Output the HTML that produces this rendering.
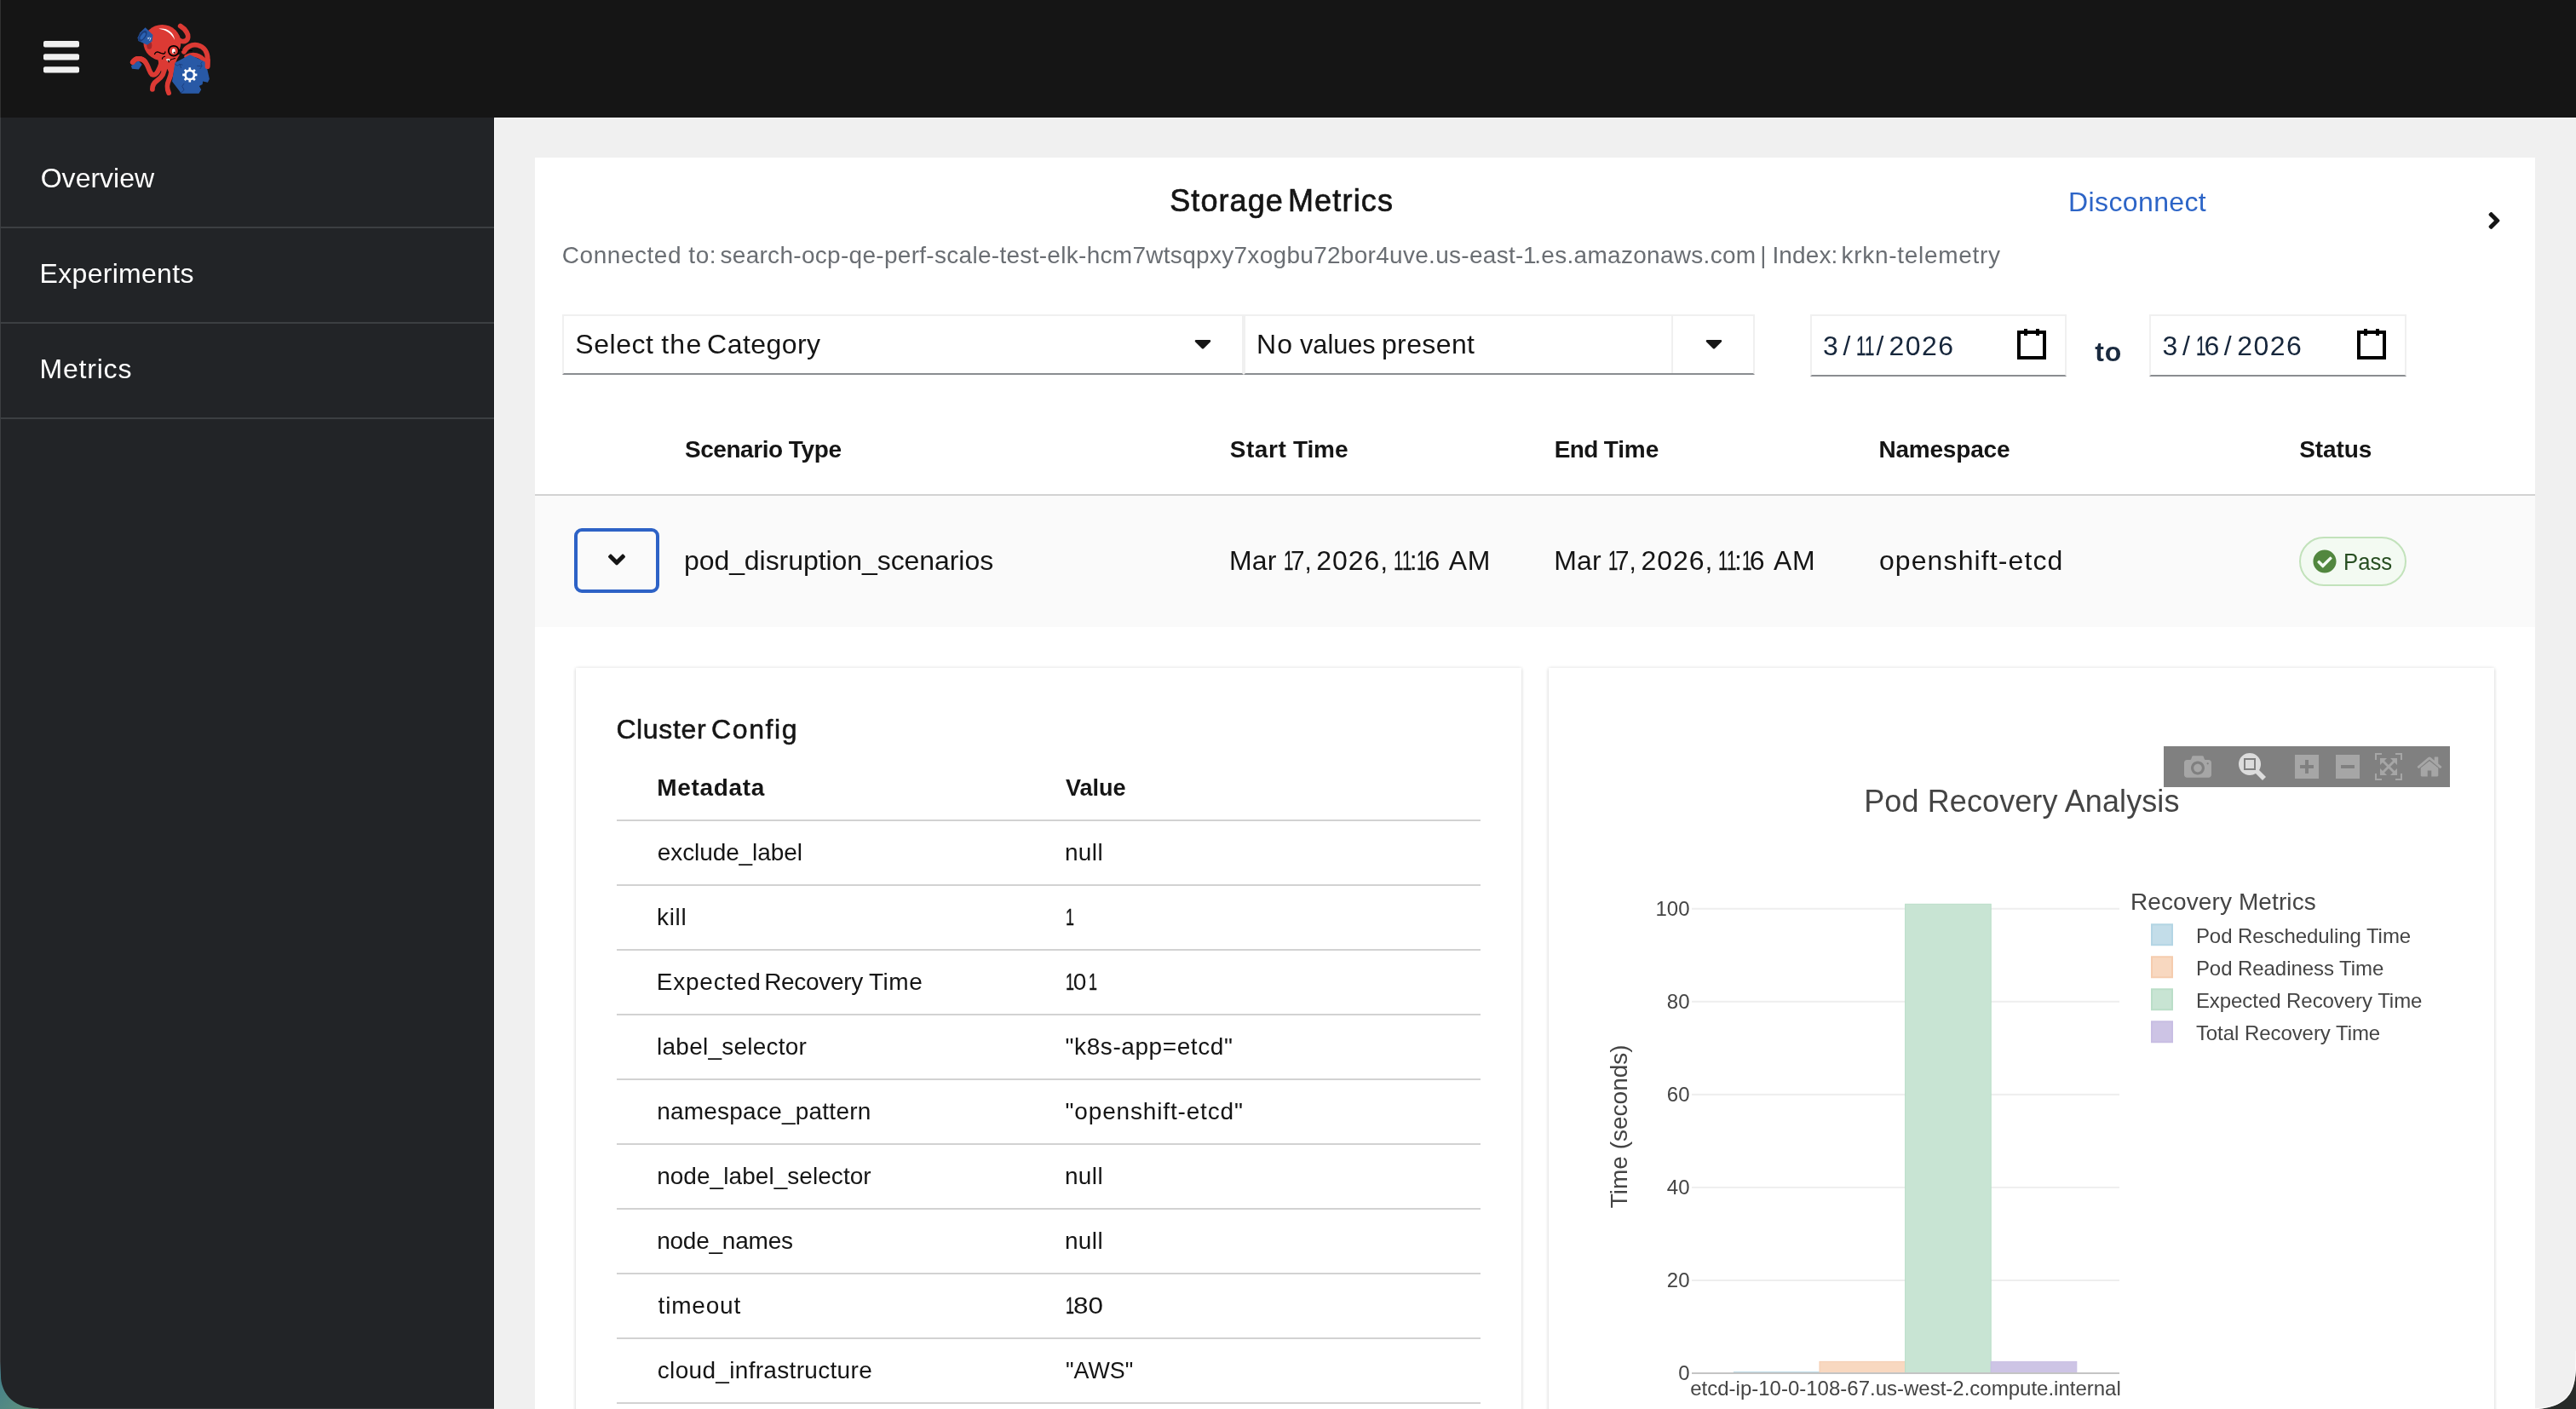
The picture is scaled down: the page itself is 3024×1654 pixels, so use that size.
<!DOCTYPE html>
<html lang="en"><head><meta charset="utf-8"><title>Krkn Dashboard - Storage Metrics</title>
<style>
html,body{margin:0;padding:0}
body{width:3024px;height:1654px;overflow:hidden;position:relative;background:#f0f0f0;font-family:"Liberation Sans",sans-serif;color:#151515}
.a{position:absolute}
.t{position:absolute;white-space:nowrap;font-family:"Liberation Sans",sans-serif}
.n1{font-style:normal;margin-left:-0.030em;margin-right:-0.090em}
svg{position:absolute;overflow:visible}
#win{position:absolute;left:0;top:0;width:3024px;height:1654px;overflow:hidden;background:#f0f0f0;}
#fg{position:absolute;left:0;top:0;width:3024px;height:1654px;will-change:transform}
</style></head><body><div id="win">

<div class="a" style="left:0;top:0;width:3024px;height:138px;background:#151515"></div>
<div class="a" style="left:0;top:138px;width:580px;height:1516px;background:#222427"></div>
<div class="a" style="left:580px;top:138px;width:2444px;height:1px;background:#fff"></div>
<div class="a" style="left:580px;top:138px;width:1px;height:1516px;background:#fff"></div>
<div class="a" style="left:0;top:0;width:1px;height:1654px;background:rgba(255,255,255,.12)"></div>
<svg style="left:51px;top:48px" width="42" height="38" viewBox="0 0 42 38"><g fill="#f0f0f0"><rect x="0" y="0" width="42" height="7.4" rx="2"/><rect x="0" y="15.2" width="42" height="7.4" rx="2"/><rect x="0" y="30.2" width="42" height="7.4" rx="2"/></g></svg>
<svg style="left:140px;top:20px" width="120" height="100" viewBox="0 0 120 100">
<g fill="none" stroke="#dc3a34" stroke-linecap="round" stroke-linejoin="round" stroke-width="5.8">
<path d="M66.5,24 C70,28.6 75.5,29.6 78.4,27.6 C81.2,25.6 81.4,21.4 79,17.6 C77,14.4 74.4,12.2 71.7,10.6"/>
<path d="M76,40.8 C78.4,35.4 85,31.6 92,33 C99.6,34.6 103.9,41.4 103.8,50 C103.7,53.6 103.6,56 103.5,58.2"/>
<path stroke-width="5.4" d="M79,46.6 C86,42.4 95.5,44.4 100.2,52"/>
<path d="M15.8,53 C17.4,50.2 20,48.8 22.8,48.9 C26,49 28.6,50 30.4,52.4 C32.4,55 33.2,57.2 34.2,59.6 C35.4,62.6 36.2,65.6 38.4,67.4 C40.6,68.6 43.2,67.2 45,64.2 C47,60.8 48.2,58 49,55"/>
<path d="M53.5,57 C53.5,66 50,71 44.2,74.7 C40,77.5 38.9,80.5 38.9,84.8"/>
<path d="M61.6,55 C61.8,64 60.5,69 58.5,73.2 C55.6,79.4 55.5,83.2 58.1,89.1"/>
</g>
<path fill="#dc3a34" d="M45,46 C46,56 48,62 51,66 L56.5,61 L58.7,66 L64.5,62 C65,56 67,50 71,44 Z"/>
<ellipse cx="50.4" cy="30" rx="22" ry="21" fill="#dc3a34"/>
<ellipse cx="35.3" cy="33.2" rx="3" ry="4.5" fill="#a3272a"/>
<path fill="#2859a6" d="M30.6,12.3 L39.5,21.1 L38.6,28.5 L32.9,32.7 L22.4,28.1 L21.6,24.2 L24.4,18.2 Z"/>
<ellipse cx="27.4" cy="22.2" rx="3.7" ry="7.4" transform="rotate(35 27.4 22.2)" fill="#1b3d7c"/>
<ellipse cx="27.7" cy="22.3" rx="2" ry="4.7" transform="rotate(35 27.7 22.3)" fill="#2c62b4"/>
<path fill="none" stroke="#e4ecf7" stroke-width="0.75" d="M33.2,23.8 l1.7,2 M35.3,23.5 l-1.9,2.7 M35.9,24.4 l1,1.4 M37.1,23.9 l-1.5,4"/>
<path fill="#fff" d="M46.3,13.8 C55,12.4 63.8,17 65.1,26.9 C61.6,19.6 55,15.2 46.3,13.8Z"/>
<path fill="#2859a6" d="M83,44.2 L100.5,52.6 L103.2,60.8 L105.9,72.8 L103.9,76.7 L98.1,75.5 L97.7,79 L93.9,80.9 L96.2,85.2 L93.5,89.7 L72.9,89.7 L62,75.5 L65.5,53.6 Z"/>
<path fill="none" stroke="#1b3d7c" stroke-width="0.95" stroke-linejoin="round" stroke-linecap="round" d="M65.6,55.3 L68.2,57.2 L71,55.3 L72.5,59.6 M71,55.3 L74,56.1 M97.3,52.6 L95.8,54.5 L97,57.3 L95,60.7 M91.5,57.3 L97,57.6 M76,78.2 L73.7,81.3 L76,85.2 L74,87.9 L71.8,88.7"/>
<path fill="#fff" fill-rule="evenodd" d="M81.51,61.43 L81.51,59.30 L84.09,59.30 L84.09,61.43 L86.47,62.41 L87.97,60.90 L89.80,62.73 L88.29,64.23 L89.27,66.61 L91.40,66.61 L91.40,69.19 L89.27,69.19 L88.29,71.57 L89.80,73.07 L87.97,74.90 L86.47,73.39 L84.09,74.37 L84.09,76.50 L81.51,76.50 L81.51,74.37 L79.13,73.39 L77.63,74.90 L75.80,73.07 L77.31,71.57 L76.33,69.19 L74.20,69.19 L74.20,66.61 L76.33,66.61 L77.31,64.23 L75.80,62.73 L77.63,60.90 L79.13,62.41Z M86.70,67.90 A3.9,3.9 0 1,0 78.90,67.90 A3.9,3.9 0 1,0 86.70,67.90Z"/>
<path fill="none" stroke="#dc3a34" stroke-width="5.8" stroke-linecap="round" d="M103.78,51 C103.7,53.6 103.6,56 103.5,58.2"/>
<circle cx="63.8" cy="39.7" r="5.95" fill="#dc3a34" stroke="#000" stroke-width="1.75"/>
<ellipse cx="63.8" cy="39.9" rx="1.95" ry="3" fill="#fff"/>
<circle cx="64.5" cy="41.7" r="0.95" fill="#000"/>
<path fill="none" stroke="#000" stroke-width="1.3" stroke-linecap="round" d="M70.6,38.7 L73.7,38.9 M82.4,39.7 L85.4,39.3"/>
<path fill="none" stroke="#000" stroke-width="1.3" stroke-linecap="round" d="M41.5,43.5 C42.2,41.6 43.2,40.9 44.4,40.8 C46,40.8 47.4,41.8 49.2,42.5 C50.8,43.1 52.4,43.1 53.2,42.6 C53.8,42.2 54,41.6 53.9,40.9"/>
<path fill="none" stroke="#000" stroke-width="1.1" stroke-linecap="round" d="M50.4,49.1 C50.5,47.6 51.8,46.5 53.6,46.2"/>
<path fill="#fff" d="M55,49.8 C56.4,48.7 58.8,48.9 60,50.2 L58.6,52.4 C56.8,52.3 55.4,51.2 55,49.8Z"/>
<path fill="none" stroke="#000" stroke-width="1" stroke-linecap="round" stroke-linejoin="round" d="M57.2,50.4 L58.2,53.2 L59.7,50.4 C61.6,49.6 63.6,49 65.5,48.5"/>
<path fill="#2859a6" d="M13.9,57.3 L22.4,50.9 L26.7,55.7 L22.8,61.5 L15,60.75 Z"/>
<path fill="none" stroke="#dc3a34" stroke-width="5.8" stroke-linecap="round" d="M15.8,53 C17.4,50.2 20,48.8 22.8,48.9 C26,49 28.6,50 30.4,52.4"/>
</svg>
<div class="a" style="left:0;top:266px;width:580px;height:2px;background:#3c3f42"></div>
<div class="a" style="left:0;top:378px;width:580px;height:2px;background:#3c3f42"></div>
<div class="a" style="left:0;top:490px;width:580px;height:2px;background:#3c3f42"></div>
<div class="a" style="left:628px;top:185px;width:2348px;height:1469px;background:#fff"></div>
<svg style="left:2920px;top:243.4px" width="16" height="32" viewBox="0 0 256 512"><path fill="#151515" d="M224.3 273l-136 136c-9.4 9.4-24.6 9.4-33.9 0l-22.6-22.6c-9.4-9.4-9.4-24.6 0-33.9l96.4-96.4-96.4-96.4c-9.4-9.4-9.4-24.6 0-33.9L54.3 103c9.4-9.4 24.6-9.4 33.9 0l136 136c9.5 9.4 9.5 24.6.1 34z"/></svg>
<div class="a" style="left:660px;top:369px;width:800px;height:71px;box-sizing:border-box;background:#fff;border:2px solid #f0f0f0;border-bottom:2px solid #8a8d90"></div>
<div class="a" style="left:1460px;top:369px;width:600px;height:71px;box-sizing:border-box;background:#fff;border:2px solid #f0f0f0;border-bottom:2px solid #8a8d90"></div>
<div class="a" style="left:1962px;top:371px;width:2px;height:67px;background:#f0f0f0"></div>
<svg style="left:1402px;top:386.7px" width="20" height="32" viewBox="0 0 320 512"><path fill="#151515" d="M31.3 192h257.3c17.8 0 26.7 21.5 14.1 34.1L174.1 354.8c-7.8 7.8-20.5 7.8-28.3 0L17.2 226.1C4.6 213.5 13.5 192 31.3 192z"/></svg>
<svg style="left:2001.8px;top:386.9px" width="20" height="32" viewBox="0 0 320 512"><path fill="#151515" d="M31.3 192h257.3c17.8 0 26.7 21.5 14.1 34.1L174.1 354.8c-7.8 7.8-20.5 7.8-28.3 0L17.2 226.1C4.6 213.5 13.5 192 31.3 192z"/></svg>
<div class="a" style="left:2125px;top:369px;width:301px;height:73px;box-sizing:border-box;background:#fff;border:2px solid #f0f0f0;border-bottom:2px solid #8a8d90"></div>
<div class="a" style="left:2523px;top:369px;width:302px;height:73px;box-sizing:border-box;background:#fff;border:2px solid #f0f0f0;border-bottom:2px solid #8a8d90"></div>
<svg style="left:2368px;top:386px" width="34" height="38" viewBox="0 0 34 38"><path fill="none" stroke="#000" stroke-width="4" d="M2 4H32V34H2Z"/><path fill="#000" d="M8 0h4v8H8zM22 0h4v8h-4z"/></svg>
<svg style="left:2767px;top:386px" width="34" height="38" viewBox="0 0 34 38"><path fill="none" stroke="#000" stroke-width="4" d="M2 4H32V34H2Z"/><path fill="#000" d="M8 0h4v8H8zM22 0h4v8h-4z"/></svg>
<div class="a" style="left:628px;top:580px;width:2348px;height:2px;background:#d2d2d2"></div>
<div class="a" style="left:628px;top:582px;width:2348px;height:154px;background:#fafafa"></div>
<div class="a" style="left:674px;top:620px;width:100px;height:76px;box-sizing:border-box;border:4px solid #2d62c6;border-radius:9px;background:#fafafa"></div>
<svg style="left:714px;top:641.3px" width="20" height="32" viewBox="0 0 320 512"><path fill="#151515" d="M143 352.3L7 216.3c-9.4-9.4-9.4-24.6 0-33.9l22.6-22.6c9.4-9.4 24.6-9.4 33.9 0l96.4 96.4 96.4-96.4c9.4-9.4 24.6-9.4 33.9 0l22.6 22.6c9.4 9.4 9.4 24.6 0 33.9l-136 136c-9.2 9.4-24.4 9.4-33.8 0z"/></svg>
<div class="a" style="left:2699px;top:630px;width:126px;height:58px;box-sizing:border-box;border:2px solid #c2e2bb;border-radius:29px;background:#f3faf2"></div>
<svg style="left:2715px;top:645px" width="28" height="28" viewBox="0 0 512 512"><path fill="#52873f" d="M504 256c0 136.967-111.033 248-248 248S8 392.967 8 256 119.033 8 256 8s248 111.033 248 248zM227.314 387.314l184-184c6.248-6.248 6.248-16.379 0-22.627l-22.627-22.627c-6.248-6.249-16.379-6.249-22.628 0L216 308.118l-70.059-70.059c-6.248-6.248-16.379-6.248-22.628 0l-22.627 22.627c-6.248 6.248-6.248 16.379 0 22.627l104 104c6.249 6.249 16.379 6.249 22.628.001z"/></svg>
<div class="a" style="left:676px;top:784px;width:1110px;height:900px;box-shadow:0 1px 4px rgba(3,3,3,.14),0 0 4px rgba(3,3,3,.07);background:#fff"></div>
<div class="a" style="left:724px;top:962px;width:1014px;height:2px;background:#d2d2d2"></div>
<div class="a" style="left:724px;top:1038px;width:1014px;height:2px;background:#d2d2d2"></div>
<div class="a" style="left:724px;top:1114px;width:1014px;height:2px;background:#d2d2d2"></div>
<div class="a" style="left:724px;top:1190px;width:1014px;height:2px;background:#d2d2d2"></div>
<div class="a" style="left:724px;top:1266px;width:1014px;height:2px;background:#d2d2d2"></div>
<div class="a" style="left:724px;top:1342px;width:1014px;height:2px;background:#d2d2d2"></div>
<div class="a" style="left:724px;top:1418px;width:1014px;height:2px;background:#d2d2d2"></div>
<div class="a" style="left:724px;top:1494px;width:1014px;height:2px;background:#d2d2d2"></div>
<div class="a" style="left:724px;top:1570px;width:1014px;height:2px;background:#d2d2d2"></div>
<div class="a" style="left:724px;top:1646px;width:1014px;height:2px;background:#d2d2d2"></div>
<div class="a" style="left:1818px;top:784px;width:1110px;height:900px;box-shadow:0 1px 4px rgba(3,3,3,.14),0 0 4px rgba(3,3,3,.07);background:#fff"></div>
<div class="a" style="left:36px;top:1653px;width:544px;height:1px;background:rgba(255,255,255,.13)"></div>
<div id="fg">
<span class="t" style="left:47.73px;top:193.41px;font-size:32px;line-height:32px;letter-spacing:0.011px;color:#fff;">Overview</span>
<span class="t" style="left:46.62px;top:305.41px;font-size:32px;line-height:32px;letter-spacing:0.294px;color:#fff;">Experiments</span>
<span class="t" style="left:46.62px;top:417.41px;font-size:32px;line-height:32px;letter-spacing:0.779px;color:#fff;">Metrics</span>
<span class="t" style="left:1373.27px;top:217.52px;font-size:36px;line-height:36px;letter-spacing:1.074px;color:#151515;-webkit-text-stroke:.7px #151515;">Storage</span>
<span class="t" style="left:1511.95px;top:217.52px;font-size:36px;line-height:36px;letter-spacing:1.176px;color:#151515;-webkit-text-stroke:.7px #151515;">Metrics</span>
<span class="t" style="left:2428.12px;top:220.91px;font-size:32px;line-height:32px;letter-spacing:0.368px;color:#2d65c7;">Disconnect</span>
<span class="t" style="left:659.83px;top:285.54px;font-size:28px;line-height:28px;letter-spacing:0.532px;color:#6a6e73;">Connected to:</span>
<span class="t" style="left:845.47px;top:285.54px;font-size:28px;line-height:28px;letter-spacing:0.295px;color:#6a6e73;">search-ocp-qe-perf-scale-test-elk-hcm7wtsqpxy7xogbu72bor4uve.us-east-<i class="n1">1</i>.es.amazonaws.com</span>
<span class="t" style="left:2066.20px;top:285.54px;font-size:28px;line-height:28px;letter-spacing:0.000px;color:#6a6e73;">|</span>
<span class="t" style="left:2080.42px;top:285.54px;font-size:28px;line-height:28px;letter-spacing:0.123px;color:#6a6e73;">Index:</span>
<span class="t" style="left:2161.61px;top:285.54px;font-size:28px;line-height:28px;letter-spacing:0.698px;color:#6a6e73;">krkn-telemetry</span>
<span class="t" style="left:675.30px;top:387.91px;font-size:32px;line-height:32px;letter-spacing:0.550px;color:#151515;">Select</span>
<span class="t" style="left:776.27px;top:387.91px;font-size:32px;line-height:32px;letter-spacing:1.211px;color:#151515;">the</span>
<span class="t" style="left:830.12px;top:387.91px;font-size:32px;line-height:32px;letter-spacing:0.442px;color:#151515;">Category</span>
<span class="t" style="left:1474.88px;top:387.91px;font-size:32px;line-height:32px;letter-spacing:1.312px;color:#151515;">No</span>
<span class="t" style="left:1526.40px;top:387.91px;font-size:32px;line-height:32px;letter-spacing:0.000px;color:#151515;transform:scaleX(0.9591);transform-origin:0 0;">values</span>
<span class="t" style="left:1621.94px;top:387.91px;font-size:32px;line-height:32px;letter-spacing:0.385px;color:#151515;">present</span>
<span class="t" style="left:2139.98px;top:389.61px;font-size:32px;line-height:32px;letter-spacing:0.000px;color:#16263b;">3</span>
<span class="t" style="left:2163.60px;top:389.61px;font-size:32px;line-height:32px;letter-spacing:0.000px;color:#16263b;">/</span>
<span class="t" style="left:2202.50px;top:389.61px;font-size:32px;line-height:32px;letter-spacing:0.000px;color:#16263b;">/</span>
<span class="t" style="left:2217.39px;top:389.61px;font-size:32px;line-height:32px;letter-spacing:1.509px;color:#16263b;">2026</span>
<span class="t" style="left:2538.58px;top:389.61px;font-size:32px;line-height:32px;letter-spacing:0.000px;color:#16263b;">3</span>
<span class="t" style="left:2561.90px;top:389.61px;font-size:32px;line-height:32px;letter-spacing:0.000px;color:#16263b;">/</span>
<span class="t" style="left:2587.38px;top:389.61px;font-size:32px;line-height:32px;letter-spacing:0.000px;color:#16263b;">6</span>
<span class="t" style="left:2610.80px;top:389.61px;font-size:32px;line-height:32px;letter-spacing:0.000px;color:#16263b;">/</span>
<span class="t" style="left:2626.19px;top:389.61px;font-size:32px;line-height:32px;letter-spacing:1.509px;color:#16263b;">2026</span>
<span class="t" style="left:2179.14px;top:389.61px;font-size:32px;line-height:32px;color:#16263b;-webkit-text-stroke:.4px #16263b;transform:scaleX(0.64);transform-origin:0 0">1</span>
<span class="t" style="left:2188.94px;top:389.61px;font-size:32px;line-height:32px;color:#16263b;-webkit-text-stroke:.4px #16263b;transform:scaleX(0.64);transform-origin:0 0">1</span>
<span class="t" style="left:2577.84px;top:389.61px;font-size:32px;line-height:32px;color:#16263b;-webkit-text-stroke:.4px #16263b;transform:scaleX(0.64);transform-origin:0 0">1</span>
<span class="t" style="left:2459.21px;top:396.66px;font-size:32px;line-height:32px;letter-spacing:0.938px;color:#1b2b40;font-weight:700;">to</span>
<span class="t" style="left:803.94px;top:513.79px;font-size:28px;line-height:28px;letter-spacing:-0.446px;color:#151515;font-weight:700;">Scenario</span>
<span class="t" style="left:925.69px;top:513.79px;font-size:28px;line-height:28px;letter-spacing:-0.277px;color:#151515;font-weight:700;">Type</span>
<span class="t" style="left:1443.69px;top:513.79px;font-size:28px;line-height:28px;letter-spacing:0.589px;color:#151515;font-weight:700;">Start</span>
<span class="t" style="left:1517.94px;top:513.79px;font-size:28px;line-height:28px;letter-spacing:-0.110px;color:#151515;font-weight:700;">Time</span>
<span class="t" style="left:1824.63px;top:513.79px;font-size:28px;line-height:28px;letter-spacing:-0.582px;color:#151515;font-weight:700;">End</span>
<span class="t" style="left:1882.69px;top:513.79px;font-size:28px;line-height:28px;letter-spacing:-0.110px;color:#151515;font-weight:700;">Time</span>
<span class="t" style="left:2205.38px;top:513.79px;font-size:28px;line-height:28px;letter-spacing:-0.197px;color:#151515;font-weight:700;">Namespace</span>
<span class="t" style="left:2699.19px;top:513.79px;font-size:28px;line-height:28px;letter-spacing:-0.073px;color:#151515;font-weight:700;">Status</span>
<span class="t" style="left:802.94px;top:641.66px;font-size:32px;line-height:32px;letter-spacing:-0.064px;color:#151515;">pod_disruption_scenarios</span>
<span class="t" style="left:1442.97px;top:642.16px;font-size:32px;line-height:32px;letter-spacing:0.123px;color:#151515;">Mar</span>
<span class="t" style="left:1514.88px;top:642.16px;font-size:32px;line-height:32px;letter-spacing:0.000px;color:#151515;transform:scaleX(0.9291);transform-origin:0 0;">7,</span>
<span class="t" style="left:1545.19px;top:642.16px;font-size:32px;line-height:32px;letter-spacing:0.977px;color:#151515;">2026,</span>
<span class="t" style="left:1654.68px;top:642.16px;font-size:32px;line-height:32px;letter-spacing:0.000px;color:#151515;">:</span>
<span class="t" style="left:1672.58px;top:642.16px;font-size:32px;line-height:32px;letter-spacing:0.000px;color:#151515;">6</span>
<span class="t" style="left:1700.84px;top:642.16px;font-size:32px;line-height:32px;letter-spacing:0.587px;color:#151515;">AM</span>
<span class="t" style="left:1506.94px;top:642.16px;font-size:32px;line-height:32px;color:#151515;-webkit-text-stroke:.4px #151515;transform:scaleX(0.64);transform-origin:0 0">1</span>
<span class="t" style="left:1636.14px;top:642.16px;font-size:32px;line-height:32px;color:#151515;-webkit-text-stroke:.4px #151515;transform:scaleX(0.64);transform-origin:0 0">1</span>
<span class="t" style="left:1646.04px;top:642.16px;font-size:32px;line-height:32px;color:#151515;-webkit-text-stroke:.4px #151515;transform:scaleX(0.64);transform-origin:0 0">1</span>
<span class="t" style="left:1663.44px;top:642.16px;font-size:32px;line-height:32px;color:#151515;-webkit-text-stroke:.4px #151515;transform:scaleX(0.64);transform-origin:0 0">1</span>
<span class="t" style="left:1824.22px;top:642.16px;font-size:32px;line-height:32px;letter-spacing:0.123px;color:#151515;">Mar</span>
<span class="t" style="left:1896.13px;top:642.16px;font-size:32px;line-height:32px;letter-spacing:0.000px;color:#151515;transform:scaleX(0.9291);transform-origin:0 0;">7,</span>
<span class="t" style="left:1926.44px;top:642.16px;font-size:32px;line-height:32px;letter-spacing:0.977px;color:#151515;">2026,</span>
<span class="t" style="left:2035.93px;top:642.16px;font-size:32px;line-height:32px;letter-spacing:0.000px;color:#151515;">:</span>
<span class="t" style="left:2053.82px;top:642.16px;font-size:32px;line-height:32px;letter-spacing:0.000px;color:#151515;">6</span>
<span class="t" style="left:2082.09px;top:642.16px;font-size:32px;line-height:32px;letter-spacing:0.587px;color:#151515;">AM</span>
<span class="t" style="left:1888.19px;top:642.16px;font-size:32px;line-height:32px;color:#151515;-webkit-text-stroke:.4px #151515;transform:scaleX(0.64);transform-origin:0 0">1</span>
<span class="t" style="left:2017.39px;top:642.16px;font-size:32px;line-height:32px;color:#151515;-webkit-text-stroke:.4px #151515;transform:scaleX(0.64);transform-origin:0 0">1</span>
<span class="t" style="left:2027.29px;top:642.16px;font-size:32px;line-height:32px;color:#151515;-webkit-text-stroke:.4px #151515;transform:scaleX(0.64);transform-origin:0 0">1</span>
<span class="t" style="left:2044.69px;top:642.16px;font-size:32px;line-height:32px;color:#151515;-webkit-text-stroke:.4px #151515;transform:scaleX(0.64);transform-origin:0 0">1</span>
<span class="t" style="left:2205.91px;top:641.66px;font-size:32px;line-height:32px;letter-spacing:1.107px;color:#151515;">openshift-etcd</span>
<span class="t" style="left:2751.49px;top:645.12px;font-size:28.5px;line-height:28.5px;letter-spacing:0.000px;color:#274e21;transform:scaleX(0.9035);transform-origin:0 0;">Pass</span>
<span class="t" style="left:723.38px;top:839.91px;font-size:32px;line-height:32px;letter-spacing:0.633px;color:#151515;-webkit-text-stroke:.55px #151515;">Cluster</span>
<span class="t" style="left:835.12px;top:839.91px;font-size:32px;line-height:32px;letter-spacing:1.587px;color:#151515;-webkit-text-stroke:.55px #151515;">Config</span>
<span class="t" style="left:771.13px;top:911.29px;font-size:28px;line-height:28px;letter-spacing:0.690px;color:#151515;font-weight:700;">Metadata</span>
<span class="t" style="left:1251.07px;top:911.29px;font-size:28px;line-height:28px;letter-spacing:0.000px;color:#151515;font-weight:700;transform:scaleX(0.9653);transform-origin:0 0;">Value</span>
<span class="t" style="left:771.81px;top:987.04px;font-size:28px;line-height:28px;letter-spacing:-0.098px;color:#151515;">exclude_label</span>
<span class="t" style="left:1249.89px;top:987.04px;font-size:28px;line-height:28px;letter-spacing:0.382px;color:#151515;">null</span>
<span class="t" style="left:771.11px;top:1063.04px;font-size:28px;line-height:28px;letter-spacing:0.616px;color:#151515;">kill</span>
<span class="t" style="left:1251.21px;top:1063.04px;font-size:28px;line-height:28px;color:#151515;-webkit-text-stroke:.4px #151515;transform:scaleX(0.64);transform-origin:0 0">1</span>
<span class="t" style="left:770.70px;top:1139.04px;font-size:28px;line-height:28px;letter-spacing:0.780px;color:#151515;">Expected</span>
<span class="t" style="left:897.20px;top:1139.04px;font-size:28px;line-height:28px;letter-spacing:-0.330px;color:#151515;">Recovery</span>
<span class="t" style="left:1019.97px;top:1139.04px;font-size:28px;line-height:28px;letter-spacing:0.517px;color:#151515;">Time</span>
<span class="t" style="left:1251.01px;top:1139.04px;font-size:28px;line-height:28px;color:#151515;-webkit-text-stroke:.4px #151515;transform:scaleX(0.64);transform-origin:0 0">1</span>
<span class="t" style="left:1259.81px;top:1139.04px;font-size:28px;line-height:28px;letter-spacing:0.000px;color:#151515;">0</span>
<span class="t" style="left:1278.31px;top:1139.04px;font-size:28px;line-height:28px;color:#151515;-webkit-text-stroke:.4px #151515;transform:scaleX(0.64);transform-origin:0 0">1</span>
<span class="t" style="left:771.11px;top:1215.04px;font-size:28px;line-height:28px;letter-spacing:0.222px;color:#151515;">label_selector</span>
<span class="t" style="left:1250.56px;top:1215.04px;font-size:28px;line-height:28px;letter-spacing:0.585px;color:#151515;">&quot;k8s-app=etcd&quot;</span>
<span class="t" style="left:771.14px;top:1291.04px;font-size:28px;line-height:28px;letter-spacing:0.230px;color:#151515;">namespace_pattern</span>
<span class="t" style="left:1250.56px;top:1291.04px;font-size:28px;line-height:28px;letter-spacing:0.841px;color:#151515;">&quot;openshift-etcd&quot;</span>
<span class="t" style="left:771.14px;top:1367.04px;font-size:28px;line-height:28px;letter-spacing:0.052px;color:#151515;">node_label_selector</span>
<span class="t" style="left:1249.89px;top:1367.04px;font-size:28px;line-height:28px;letter-spacing:0.382px;color:#151515;">null</span>
<span class="t" style="left:771.14px;top:1443.04px;font-size:28px;line-height:28px;letter-spacing:-0.226px;color:#151515;">node_names</span>
<span class="t" style="left:1249.89px;top:1443.04px;font-size:28px;line-height:28px;letter-spacing:0.382px;color:#151515;">null</span>
<span class="t" style="left:772.58px;top:1519.04px;font-size:28px;line-height:28px;letter-spacing:0.801px;color:#151515;">timeout</span>
<span class="t" style="left:1251.21px;top:1519.04px;font-size:28px;line-height:28px;color:#151515;-webkit-text-stroke:.4px #151515;transform:scaleX(0.64);transform-origin:0 0">1</span>
<span class="t" style="left:1259.64px;top:1519.04px;font-size:28px;line-height:28px;letter-spacing:0.000px;color:#151515;transform:scaleX(1.1202);transform-origin:0 0;">80</span>
<span class="t" style="left:771.81px;top:1595.04px;font-size:28px;line-height:28px;letter-spacing:0.317px;color:#151515;">cloud_infrastructure</span>
<span class="t" style="left:1250.61px;top:1595.04px;font-size:28px;line-height:28px;letter-spacing:0.000px;color:#151515;transform:scaleX(0.9597);transform-origin:0 0;">&quot;AWS&quot;</span>
<svg style="left:0;top:0" width="3024" height="1654" viewBox="0 0 3024 1654" font-family="Liberation Sans, sans-serif" fill="#444">
<rect x="1986" y="1501.95" width="502" height="2" fill="#eeeeee"/>
<rect x="1986" y="1392.90" width="502" height="2" fill="#eeeeee"/>
<rect x="1986" y="1283.85" width="502" height="2" fill="#eeeeee"/>
<rect x="1986" y="1174.80" width="502" height="2" fill="#eeeeee"/>
<rect x="1986" y="1065.75" width="502" height="2" fill="#eeeeee"/>
<rect x="2035.40" y="1610.64" width="100.60" height="1.36" fill="#c3dde9" stroke="#b3d5e4" stroke-width="1"/>
<rect x="2136.00" y="1598.37" width="100.60" height="13.63" fill="#f8d8c0" stroke="#f5ccae" stroke-width="1"/>
<rect x="2236.60" y="1061.30" width="100.60" height="550.70" fill="#c8e4d3" stroke="#badec8" stroke-width="1"/>
<rect x="2337.20" y="1598.37" width="100.60" height="13.63" fill="#cdc4e5" stroke="#c8bee3" stroke-width="1"/>
<rect x="1986" y="1611.0" width="502" height="2" fill="#c4c4c4"/>
<text x="1983.5" y="1620.30" font-size="24" text-anchor="end">0</text>
<text x="1983.5" y="1511.25" font-size="24" text-anchor="end">20</text>
<text x="1983.5" y="1402.20" font-size="24" text-anchor="end">40</text>
<text x="1983.5" y="1293.15" font-size="24" text-anchor="end">60</text>
<text x="1983.5" y="1184.10" font-size="24" text-anchor="end">80</text>
<text x="1983.5" y="1075.05" font-size="24" text-anchor="end">100</text>
<text x="2237" y="1637.7" font-size="24" text-anchor="middle">etcd-ip-10-0-108-67.us-west-2.compute.internal</text>
<text transform="translate(1910.3,1322.3) rotate(-90)" font-size="28" text-anchor="middle">Time (seconds)</text>
<text x="2373.4" y="952.5" font-size="36" text-anchor="middle" letter-spacing="0.1">Pod Recovery Analysis</text>
<text x="2501" y="1067.5" font-size="28" letter-spacing="0.1">Recovery Metrics</text>
<rect x="2526" y="1085.25" width="24" height="24" fill="#c3dde9" stroke="#b3d5e4" stroke-width="2"/>
<text x="2577.9" y="1107.30" font-size="24" letter-spacing="-0.06">Pod Rescheduling Time</text>
<rect x="2526" y="1123.25" width="24" height="24" fill="#f8d8c0" stroke="#f5ccae" stroke-width="2"/>
<text x="2577.9" y="1145.30" font-size="24" letter-spacing="-0.06">Pod Readiness Time</text>
<rect x="2526" y="1161.25" width="24" height="24" fill="#c8e4d3" stroke="#badec8" stroke-width="2"/>
<text x="2577.9" y="1183.30" font-size="24" letter-spacing="-0.06">Expected Recovery Time</text>
<rect x="2526" y="1199.25" width="24" height="24" fill="#cdc4e5" stroke="#c8bee3" stroke-width="2"/>
<text x="2577.9" y="1221.30" font-size="24" letter-spacing="-0.06">Total Recovery Time</text>
<rect x="2540" y="876" width="336" height="48" fill="#808080"/>
<svg x="2564" y="884" width="32" height="32" viewBox="0 0 1000 1000" style="position:static"><path fill="#a6a6a6" transform="matrix(1 0 0 -1 0 850)" d="m500 450c-83 0-150-67-150-150 0-83 67-150 150-150 83 0 150 67 150 150 0 83-67 150-150 150z m400 150h-120c-16 0-34 13-39 29l-31 93c-6 15-23 28-40 28h-340c-16 0-34-13-39-28l-31-94c-6-15-23-28-40-28h-120c-55 0-100-45-100-100v-450c0-55 45-100 100-100h800c55 0 100 45 100 100v450c0 55-45 100-100 100z m-400-550c-138 0-250 112-250 250 0 138 112 250 250 250 138 0 250-112 250-250 0-138-112-250-250-250z m365 380c-19 0-35 16-35 35 0 19 16 35 35 35 19 0 35-16 35-35 0-19-16-35-35-35z"/></svg>
<svg x="2628" y="884" width="32" height="32" viewBox="0 0 1000 1000" style="position:static"><path fill="#dcdcdc" transform="matrix(1 0 0 -1 0 850)" d="m1000-25l-250 251c40 63 63 138 63 218 0 224-182 406-407 406-224 0-406-182-406-406s183-406 407-406c80 0 155 22 218 62l250-250 125 125z m-812 250l0 438 437 0 0-438-437 0z m62 375l313 0 0-312-313 0 0 312z"/></svg>
<svg x="2692" y="884" width="32" height="32" viewBox="0 0 875 1000" style="position:static"><path fill="#a6a6a6" transform="matrix(1 0 0 -1 0 850)" d="m1 787l0-875 875 0 0 875-875 0z m687-500l-187 0 0-187-125 0 0 187-188 0 0 125 188 0 0 187 125 0 0-187 187 0 0-125z"/></svg>
<svg x="2740" y="884" width="32" height="32" viewBox="0 0 875 1000" style="position:static"><path fill="#a6a6a6" transform="matrix(1 0 0 -1 0 850)" d="m0 788l0-876 875 0 0 876-875 0z m688-500l-500 0 0 125 500 0 0-125z"/></svg>
<svg x="2788" y="884" width="32" height="32" viewBox="0 0 1000 1000" style="position:static"><path fill="#a6a6a6" transform="matrix(1 0 0 -1 0 850)" d="m250 850l-187 0-63 0 0-62 0-188 63 0 0 188 187 0 0 62z m688 0l-188 0 0-62 188 0 0-188 62 0 0 188 0 62-62 0z m-875-938l0 188-63 0 0-188 0-62 63 0 187 0 0 62-187 0z m875 188l0-188-188 0 0-62 188 0 62 0 0 62 0 188-62 0z m-125 188l-1 0-93-94-156 156 156 156 92-93 2 0 0 250-250 0 0-2 93-92-156-156-156 156 94 92 0 2-250 0 0-250 0 0 93 93 157-156-157-156-93 94 0 0 0-250 250 0 0 0-94 93 156 157 156-157-93-93 0 0 250 0 0 250z"/></svg>
<svg x="2836" y="884" width="32" height="32" viewBox="0 0 928.6 1000" style="position:static"><path fill="#a6a6a6" transform="matrix(1 0 0 -1 0 850)" d="m786 296v-267q0-15-11-26t-25-10h-214v214h-143v-214h-214q-15 0-25 10t-11 26v267q0 1 0 2t0 2l321 264 321-264q1-1 1-4z m124 39l-34-41q-5-5-12-6h-2q-7 0-12 3l-386 322-386-322q-7-4-13-4-7 2-12 7l-35 41q-4 5-3 13t6 12l401 334q18 15 42 15t43-15l136-114v109q0 8 5 13t13 5h107q8 0 13-5t5-13v-227l122-102q5-5 6-12t-4-13z"/></svg>
</svg>
</div>
<svg style="left:0;top:0" width="3024" height="1654" viewBox="0 0 3024 1654"><defs><linearGradient id="tl" x1="0" y1="0" x2="1" y2="1"><stop offset="0" stop-color="#3f7d8c"/><stop offset="1" stop-color="#64937c"/></linearGradient></defs><path fill="url(#tl)" d="M0,1598 L1,1615.3 C1,1630.5 10.9,1653.4 45.4,1653.4 L45.4,1654 L0,1654 Z"/><path fill="#272b29" d="M3024.4,1585.8 C3024.4,1629.3 3022.9,1654.6 2965.9,1654.6 L3024.4,1654.6 Z"/><path fill="none" stroke="#fff" stroke-opacity=".8" stroke-width="1.1" d="M3024,1585.8 C3024,1629.3 3022.6,1654.2 2965.9,1654.2"/></svg>
</div>
<script>(function(){var w=window.innerWidth||0;if(w>100&&Math.abs(w-3024)>3){var s=w/3024,e=document.getElementById("win");e.style.transformOrigin="0 0";e.style.transform="scale("+s+")";document.body.style.width=w+"px";document.body.style.height=Math.round(1654*s)+"px";}})();</script>
</body></html>
